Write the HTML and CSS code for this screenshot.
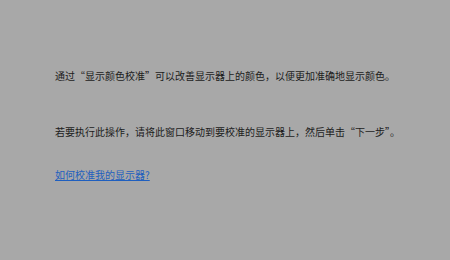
FILE: index.html
```html
<!DOCTYPE html>
<html lang="zh-CN">
<head>
    <meta charset="UTF-8">
    <title>显示颜色校准</title>
    <link rel="stylesheet" href="styles.css">
</head>
<body>
    <div class="intro">
        <p class="intro-text first">通过“显示颜色校准”可以改善显示器上的颜色，以便更加准确地显示颜色。</p>
        <p class="intro-text second">若要执行此操作，请将此窗口移动到要校准的显示器上，然后单击“下一步”。</p>
        <a class="help-link" href="#">如何校准我的显示器?</a>
    </div>
</body>
</html>
```

FILE: styles.css
```css
body {
    margin: 0;
    height: 260px;
    background-color: #a8a8a8;
    font-family: "Noto Sans CJK SC", "Microsoft YaHei", sans-serif;
    font-size: 10px;
    line-height: 15px;
    color: #1c1c1c;
}
.intro {
    padding: 68px 0 0 55px;
}
.intro-text {
    margin: 0;
}
.intro-text.first {
    margin-bottom: 41px;
}
.intro-text.second {
    margin-bottom: 28px;
}
.help-link {
    display: inline-block;
    color: #1f5fbf;
    text-decoration: underline;
}
```
